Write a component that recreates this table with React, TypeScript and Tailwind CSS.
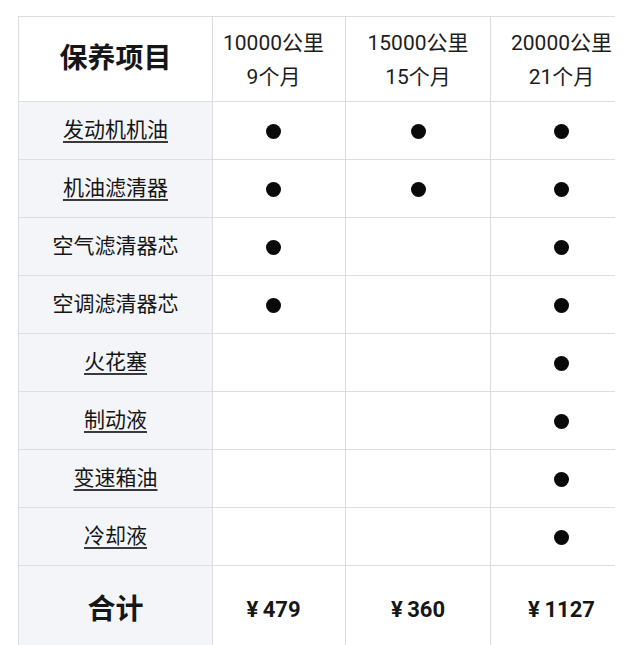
const FONT = "font-['Roboto','Noto_Sans_CJK_SC',sans-serif]"

const COLS = [
  { km: '10000公里', months: '9个月', total: '479' },
  { km: '15000公里', months: '15个月', total: '360' },
  { km: '20000公里', months: '21个月', total: '1127' },
]

// which intervals include each item
const ITEMS: { name: string; link: boolean; marks: boolean[] }[] = [
  { name: '发动机机油', link: true, marks: [true, true, true] },
  { name: '机油滤清器', link: true, marks: [true, true, true] },
  { name: '空气滤清器芯', link: false, marks: [true, false, true] },
  { name: '空调滤清器芯', link: false, marks: [true, false, true] },
  { name: '火花塞', link: true, marks: [false, false, true] },
  { name: '制动液', link: true, marks: [false, false, true] },
  { name: '变速箱油', link: true, marks: [false, false, true] },
  { name: '冷却液', link: true, marks: [false, false, true] },
]

// first value column sits a bit left of its cell centre in the screenshot
const colPad = ['pr-[11px]', '', '']

function Dot() {
  return <span className="inline-block w-[15px] h-[15px] rounded-full bg-[#0a0a0a] align-middle" />
}

export default function App() {
  return (
    <div className={`w-[640px] h-[645px] bg-white overflow-hidden pt-[16px] pl-[18px] ${FONT}`}>
      <div className="w-[597px] overflow-hidden">
        <table className="table-fixed border-collapse w-[614px] text-[#161616]">
          <colgroup>
            <col className="w-[194px]" />
            <col className="w-[133px]" />
            <col className="w-[145px]" />
            <col className="w-[142px]" />
          </colgroup>
          <thead>
            <tr className="h-[85px]">
              <th className="border border-[#dedee2] bg-white text-[28px] font-bold text-center align-middle">
                保养项目
              </th>
              {COLS.map((c, i) => (
                <th
                  key={c.km}
                  className={`border border-[#dedee2] bg-white text-[21px] font-normal leading-[34px] text-center align-middle text-[#1c1c1c] pt-[2px] ${colPad[i]}`}
                >
                  <div>{c.km}</div>
                  <div>{c.months}</div>
                </th>
              ))}
            </tr>
          </thead>
          <tbody>
            {ITEMS.map(item => (
              <tr key={item.name} className="h-[58px]">
                <td className="border border-[#dedee2] bg-[#f3f5f9] text-[21px] text-center align-middle">
                  <span
                    className={
                      item.link
                        ? 'underline decoration-[1.5px] decoration-[#3a3a3a] underline-offset-[4px]'
                        : ''
                    }
                  >
                    {item.name}
                  </span>
                </td>
                {item.marks.map((m, i) => (
                  <td
                    key={i}
                    className={`border border-[#dedee2] bg-white text-center align-middle ${colPad[i]}`}
                  >
                    {m && <Dot />}
                  </td>
                ))}
              </tr>
            ))}
            <tr className="h-[90px]">
              <td className="border border-[#dedee2] bg-[#f3f5f9] text-[28px] font-bold text-center align-middle pb-[2px]">
                合计
              </td>
              {COLS.map((c, i) => (
                <td
                  key={c.km}
                  className={`border border-[#dedee2] bg-white text-[22px] font-bold text-center align-middle pb-[2px] ${colPad[i]}`}
                >
                  ¥&thinsp;{c.total}
                </td>
              ))}
            </tr>
          </tbody>
        </table>
      </div>
    </div>
  )
}
